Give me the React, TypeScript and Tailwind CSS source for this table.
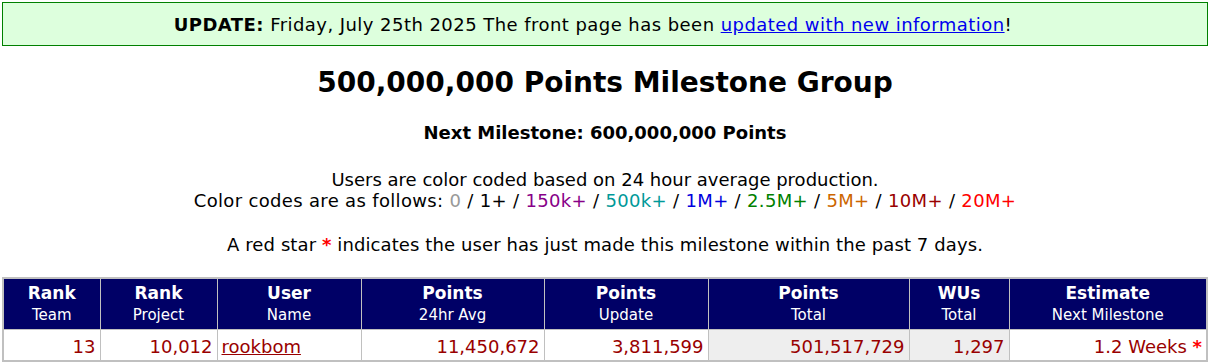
const codes: { label: string; color: string }[] = [
  { label: "0", color: "text-[#999999]" },
  { label: "1+", color: "text-black" },
  { label: "150k+", color: "text-[#880088]" },
  { label: "500k+", color: "text-[#009999]" },
  { label: "1M+", color: "text-[#0000dd]" },
  { label: "2.5M+", color: "text-[#008000]" },
  { label: "5M+", color: "text-[#cc6600]" },
  { label: "10M+", color: "text-[#990000]" },
  { label: "20M+", color: "text-[#ff0000]" },
];

const headers = [
  { top: "Rank", sub: "Team", w: "w-[97px]" },
  { top: "Rank", sub: "Project", w: "w-[117px]" },
  { top: "User", sub: "Name", w: "w-[144px]" },
  { top: "Points", sub: "24hr Avg", w: "w-[183px]" },
  { top: "Points", sub: "Update", w: "w-[164px]" },
  { top: "Points", sub: "Total", w: "w-[201px]" },
  { top: "WUs", sub: "Total", w: "w-[100px]" },
  { top: "Estimate", sub: "Next Milestone", w: "" },
];

const cell = "border border-[#c0c0c0] text-right px-[4px] pt-[3px]";

export default function App() {
  return (
    <div className="px-[2px] pt-[2px] font-['DejaVu_Sans',Verdana,sans-serif] text-black bg-white">
      {/* Update banner */}
      <div className="border border-[#008000] bg-[#ddffdd] h-[44px] flex items-center justify-center text-[18px] tracking-[0.45px] pr-[24px]">
        <span>
          <b>UPDATE:</b> Friday, July 25th 2025 The front page has been{" "}
          <a href="#" className="text-[#0000ee] underline">
            updated with new information
          </a>
          !
        </span>
      </div>

      <h1 className="text-center font-bold text-[28px] mt-[17px] leading-[40px]">
        500,000,000 Points Milestone Group
      </h1>
      <p className="text-center font-bold text-[18px] mt-[19px] leading-[22px]">
        Next Milestone: 600,000,000 Points
      </p>

      <div className="text-center text-[18px] leading-[21px] mt-[25px]">
        <div>Users are color coded based on 24 hour average production.</div>
        <div className="tracking-[0.33px]">
          Color codes are as follows:{" "}
          {codes.map((c, i) => (
            <span key={c.label}>
              <span className={c.color}>{c.label}</span>
              {i < codes.length - 1 ? " / " : ""}
            </span>
          ))}
        </div>
      </div>

      <p className="text-center text-[18px] leading-[21px] mt-[23px] tracking-[0.1px]">
        A red star <span className="text-[#ff0000] font-bold">*</span> indicates the user has just made this milestone within the past 7 days.
      </p>

      <table className="mt-[22px] w-full border-2 border-[#c0c0c0] border-collapse">
        <thead>
          <tr className="bg-[#000066] text-white">
            {headers.map((h, i) => (
              <th key={i} className={`${h.w} border border-[#c0c0c0] h-[51px] p-0 font-normal`}>
                <div className="font-bold text-[17px] leading-[21px] mt-[1px]">{h.top}</div>
                <div className="text-[15px] leading-[19px] mt-[2px]">{h.sub}</div>
              </th>
            ))}
          </tr>
        </thead>
        <tbody className="text-[#990000] text-[18px]">
          <tr className="h-[32px]">
            <td className={cell}>13</td>
            <td className={cell}>10,012</td>
            <td className="border border-[#c0c0c0] text-left px-[4px] pt-[3px]">
              <a href="#" className="underline text-[#990000]">rookbom</a>
            </td>
            <td className={cell}>11,450,672</td>
            <td className={cell}>3,811,599</td>
            <td className={`${cell} bg-[#eeeeee]`}>501,517,729</td>
            <td className={`${cell} bg-[#eeeeee]`}>1,297</td>
            <td className={cell}>
              1.2 Weeks <span className="text-[#ff0000] font-bold">*</span>
            </td>
          </tr>
        </tbody>
      </table>
    </div>
  );
}
